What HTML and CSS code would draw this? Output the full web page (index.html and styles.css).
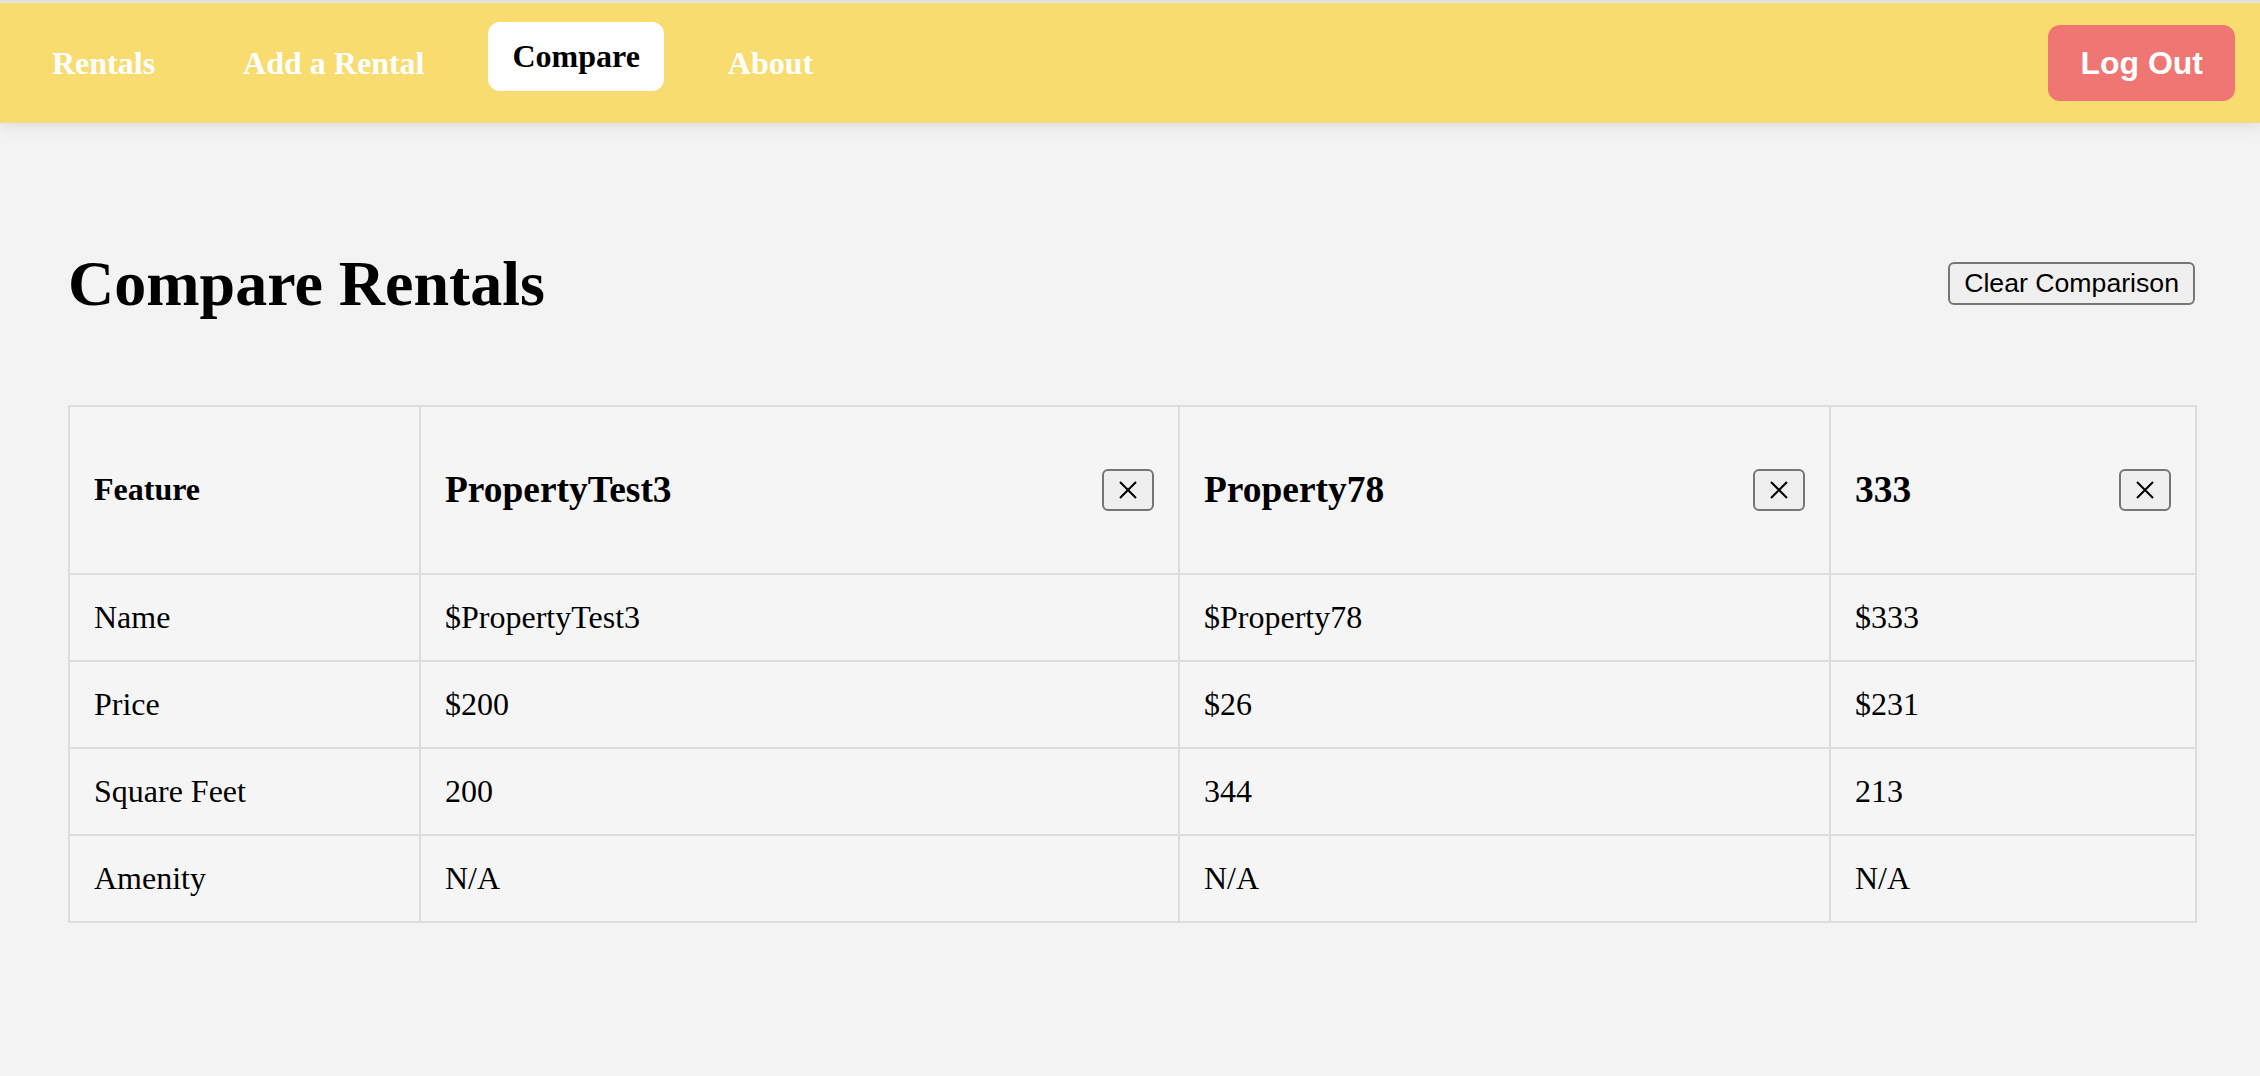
FILE: index.html
```html
<!DOCTYPE html>
<html lang="en">
<head>
<meta charset="utf-8">
<title>Compare Rentals</title>
<link rel="stylesheet" href="styles.css">
</head>
<body>
<nav class="navbar">
  <a class="nav-link" href="#">Rentals</a>
  <a class="nav-link" href="#">Add a Rental</a>
  <a class="nav-link active" href="#">Compare</a>
  <a class="nav-link" href="#">About</a>
  <button class="logout">Log Out</button>
</nav>
<main class="page">
  <div class="page-header">
    <h1 class="title">Compare Rentals</h1>
    <button class="btn">Clear Comparison</button>
  </div>
  <table class="compare">
    <colgroup>
      <col class="c1"><col class="c2"><col class="c3"><col class="c4">
    </colgroup>
    <thead>
      <tr>
        <th>Feature</th>
        <th><div class="head-cell"><h3 class="prop-name">PropertyTest3</h3><button class="btn btn-x"><svg width="18" height="18" viewBox="0 0 18 18"><path d="M1 1L17 17M17 1L1 17" stroke="#000" stroke-width="2" fill="none"/></svg></button></div></th>
        <th><div class="head-cell"><h3 class="prop-name">Property78</h3><button class="btn btn-x"><svg width="18" height="18" viewBox="0 0 18 18"><path d="M1 1L17 17M17 1L1 17" stroke="#000" stroke-width="2" fill="none"/></svg></button></div></th>
        <th><div class="head-cell"><h3 class="prop-name">333</h3><button class="btn btn-x"><svg width="18" height="18" viewBox="0 0 18 18"><path d="M1 1L17 17M17 1L1 17" stroke="#000" stroke-width="2" fill="none"/></svg></button></div></th>
      </tr>
    </thead>
    <tbody>
      <tr><td>Name</td><td>$PropertyTest3</td><td>$Property78</td><td>$333</td></tr>
      <tr><td>Price</td><td>$200</td><td>$26</td><td>$231</td></tr>
      <tr><td>Square Feet</td><td>200</td><td>344</td><td>213</td></tr>
      <tr><td>Amenity</td><td>N/A</td><td>N/A</td><td>N/A</td></tr>
    </tbody>
  </table>
</main>
</body>
</html>
```

FILE: styles.css
```css
html, body {
  margin: 0;
  padding: 0;
  background: #f3f3f3;
  font-family: "Liberation Serif", "Times New Roman", serif;
  color: #000;
}

.navbar {
  display: flex;
  align-items: center;
  gap: 40px;
  height: 120px;
  padding: 0 25px 0 28px;
  background: #f8dc70;
  border-top: 3px solid #e2e2e2;
  box-shadow: 0 4px 14px rgba(0, 0, 0, 0.09);
  position: relative;
}

.nav-link {
  display: block;
  padding: 16px 24px;
  font-size: 32px;
  font-weight: bold;
  line-height: 37px;
  color: #fff;
  text-decoration: none;
  border-radius: 12px;
}

.nav-link.active {
  background: #fff;
  color: #000;
  transform: translateY(-7px);
}

.logout {
  margin-left: auto;
  padding: 20px 32px 19px;
  font-family: "Liberation Sans", Arial, sans-serif;
  font-size: 32px;
  font-weight: bold;
  line-height: 37px;
  color: #fff;
  background: #ef7672;
  border: none;
  border-radius: 12px;
}

.page {
  padding: 82px 65px 40px 68px;
}

.page-header {
  display: flex;
  align-items: center;
  justify-content: space-between;
  margin-bottom: 43px;
}

.title {
  margin: 43px 0;
  font-size: 64px;
  font-weight: bold;
  line-height: 71px;
}

.btn {
  font-family: "Liberation Sans", Arial, sans-serif;
  font-size: 26.67px;
  line-height: 34px;
  padding: 2px 14px 3px;
  color: #000;
  background: #efefef;
  border: 2px solid #767676;
  border-radius: 6px;
}

.btn-x {
  display: inline-flex;
  align-items: center;
  justify-content: center;
  padding: 10px 15px;
  line-height: 0;
}

.compare {
  width: 100%;
  border-collapse: collapse;
  table-layout: fixed;
}

.c1 { width: 351px; }
.c2 { width: 759px; }
.c3 { width: 651px; }
.c4 { width: 366px; }

.compare th,
.compare td {
  border: 2px solid #dddddd;
  padding: 24px;
  background: #f5f5f5;
  text-align: left;
  vertical-align: middle;
  font-size: 32px;
  line-height: 37px;
}

.compare th {
  font-weight: bold;
}

.head-cell {
  display: flex;
  align-items: center;
  justify-content: space-between;
}

.prop-name {
  margin: 37.44px 0;
  font-size: 37.44px;
  line-height: 43px;
  font-weight: bold;
}
```
